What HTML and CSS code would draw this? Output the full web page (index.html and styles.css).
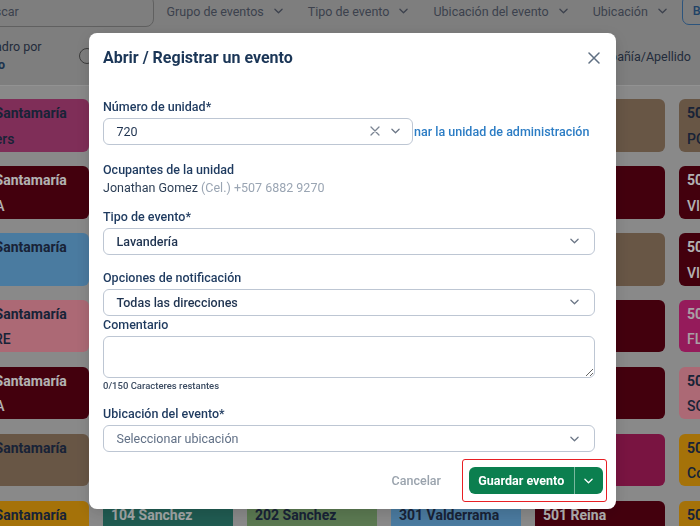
FILE: index.html
```html
<!DOCTYPE html>
<html lang="es">
<head>
<meta charset="utf-8">
<title>Abrir / Registrar un evento</title>
<link rel="stylesheet" href="styles.css">
</head>
<body>
<div class="app">
  <header class="toolbar">
    <div class="toolbar-row">
      <div class="search">Buscar</div>
      <div class="filters">
        <div class="filter"><span>Grupo de eventos</span><svg class="chev" viewBox="0 0 10 6"><path d="M1 1L5 5L9 1"/></svg></div>
        <div class="filter"><span>Tipo de evento</span><svg class="chev" viewBox="0 0 10 6"><path d="M1 1L5 5L9 1"/></svg></div>
        <div class="filter"><span>Ubicación del evento</span><svg class="chev" viewBox="0 0 10 6"><path d="M1 1L5 5L9 1"/></svg></div>
        <div class="filter"><span>Ubicación</span><svg class="chev" viewBox="0 0 10 6"><path d="M1 1L5 5L9 1"/></svg></div>
      </div>
      <div class="outline-btn">Borrar</div>
    </div>
    <div class="toolbar-row2">
      <div class="group-label"><span>Cuadro por</span><strong>Tipo</strong></div>
      <span class="radio"></span>
      <span class="radio-label">Compañía/Apellido</span>
    </div>
  </header>

  <main class="board">
    <!-- row 1 -->
    <div class="card pink"><b>103 Santamaría</b><span>Owners</span></div>
    <div class="card maroon"></div>
    <div class="card blue"></div>
    <div class="card brown"></div>
    <div class="card brown"></div>
    <div class="card brown"><b>501 Pardo</b><span>POSADA</span></div>
    <!-- row 2 -->
    <div class="card maroon"><b>104 Santamaría</b><span>VILLA</span></div>
    <div class="card pink"></div>
    <div class="card gold"></div>
    <div class="card maroon"></div>
    <div class="card maroon"></div>
    <div class="card maroon"><b>502 Ortega</b><span>VILLA</span></div>
    <!-- row 3 -->
    <div class="card blue"><b>105 Santamaría</b></div>
    <div class="card brown"></div>
    <div class="card maroon"></div>
    <div class="card teal"></div>
    <div class="card brown"></div>
    <div class="card maroon"><b>503 Navarro</b><span>VILLA</span></div>
    <!-- row 4 -->
    <div class="card rose"><b>106 Santamaría</b><span>SOBRE</span></div>
    <div class="card green"></div>
    <div class="card blue"></div>
    <div class="card pink"></div>
    <div class="card maroon"></div>
    <div class="card magenta"><b>504 Flores</b><span>FLORES</span></div>
    <!-- row 5 -->
    <div class="card maroon"><b>107 Santamaría</b><span>VILLA</span></div>
    <div class="card gold"></div>
    <div class="card brown"></div>
    <div class="card maroon"></div>
    <div class="card maroon"></div>
    <div class="card rose"><b>505 Solís</b><span>SOBRE</span></div>
    <!-- row 6 -->
    <div class="card brown"><b>108 Santamaría</b></div>
    <div class="card maroon"></div>
    <div class="card rose"></div>
    <div class="card gold"></div>
    <div class="card plum"></div>
    <div class="card gold"><b>506 Cortés</b><span>Comercial</span></div>
    <!-- row 7 -->
    <div class="card gold"><b>109 Santamaría</b></div>
    <div class="card teal"><b>104 Sanchez</b></div>
    <div class="card green"><b>202 Sanchez</b></div>
    <div class="card blue"><b>301 Valderrama</b></div>
    <div class="card maroon"><b>501 Reina</b></div>
    <div class="card gold"><b>507 Campos</b></div>
  </main>
</div>

<div class="backdrop"></div>

<div class="modal" role="dialog" aria-labelledby="modal-title">
  <div class="modal-header">
    <h2 id="modal-title">Abrir / Registrar un evento</h2>
    <button class="close" type="button" aria-label="Cerrar">
      <svg viewBox="0 0 12 12"><path d="M1 1L11 11M11 1L1 11"/></svg>
    </button>
  </div>

  <form class="modal-body">
    <div class="field">
      <label class="label">Número de unidad*</label>
      <div class="unit-row">
        <div class="control unit">
          <span class="value">720</span>
          <span class="icons">
            <svg class="clear" viewBox="0 0 10 10"><path d="M1 1L9 9M9 1L1 9"/></svg>
            <svg class="chev" viewBox="0 0 10 6"><path d="M1 1L5 5L9 1"/></svg>
          </span>
        </div>
        <a class="link">nar la unidad de administración</a>
      </div>
    </div>

    <div class="occupants">
      <div class="occ-title">Ocupantes de la unidad</div>
      <div class="occ-line">Jonathan Gomez <span class="muted">(Cel.) +507 6882 9270</span></div>
    </div>

    <div class="field gap-12">
      <label class="label">Tipo de evento*</label>
      <div class="control"><span class="value strong">Lavandería</span><svg class="chev" viewBox="0 0 10 6"><path d="M1 1L5 5L9 1"/></svg></div>
    </div>

    <div class="field gap-15">
      <label class="label">Opciones de notificación</label>
      <div class="control"><span class="value strong">Todas las direcciones</span><svg class="chev" viewBox="0 0 10 6"><path d="M1 1L5 5L9 1"/></svg></div>
    </div>

    <div class="field gap-1">
      <label class="label">Comentario</label>
      <textarea class="textarea"></textarea>
      <div class="counter">0/150 Caracteres restantes</div>
    </div>

    <div class="field gap-14">
      <label class="label">Ubicación del evento*</label>
      <div class="control"><span class="value placeholder">Seleccionar ubicación</span><svg class="chev" viewBox="0 0 10 6"><path d="M1 1L5 5L9 1"/></svg></div>
    </div>
  </form>

  <div class="modal-footer">
    <button class="cancel" type="button">Cancelar</button>
    <div class="highlight">
      <div class="split">
        <button class="primary" type="button">Guardar evento</button>
        <button class="caret" type="button" aria-label="Más opciones"><svg class="chev" viewBox="0 0 10 6"><path d="M1 1L5 5L9 1"/></svg></button>
      </div>
    </div>
  </div>
</div>
</body>
</html>
```

FILE: styles.css
```css
html, body {
  margin: 0;
  padding: 0;
}
body {
  width: 700px;
  height: 526px;
  overflow: hidden;
  font-family: Roboto, "Liberation Sans", sans-serif;
  font-size: 12.5px;
  background: #c5c5c5;
}

/* ---------- background page ---------- */
.app {
  width: 750px;
  margin-left: -41px;
}
.toolbar {
  background: #b5b5b5;
}
.toolbar-row {
  display: flex;
  align-items: center;
  height: 32px;
  margin-top: -5px;
  padding-left: 10px;
}
.toolbar-row > * {
  flex: none;
}
.search {
  width: 185px;
  height: 32px;
  box-sizing: border-box;
  border: 1px solid #8a8a8a;
  border-radius: 8px;
  padding-left: 10px;
  display: flex;
  align-items: center;
  color: #565e6f;
}
.filters {
  display: flex;
  gap: 25px;
  margin-left: 12.5px;
}
.filter {
  display: flex;
  align-items: center;
  gap: 10px;
  color: #565e6f;
  white-space: nowrap;
}
.chev {
  width: 9px;
  height: 6px;
  flex: none;
}
.chev path {
  fill: none;
  stroke: #6b7686;
  stroke-width: 1.4;
  stroke-linecap: round;
  stroke-linejoin: round;
}
.filter .chev path { stroke: #565e6f; }
.outline-btn {
  margin-left: 15px;
  align-self: flex-start;
  height: 30px;
  box-sizing: border-box;
  border: 1.5px solid #4079b3;
  border-radius: 7px;
  padding: 0 12px 0 10px;
  display: flex;
  align-items: center;
  font-weight: 500;
  color: #2e5f93;
}
.toolbar-row2 {
  display: flex;
  align-items: center;
  height: 58px;
  padding: 0 18px 0 21px;
  border-bottom: 1px solid #d2d2d2;
}
.group-label {
  width: 85px;
  display: flex;
  flex-direction: column;
  line-height: 18px;
  color: #324056;
}
.group-label strong {
  color: #2a4a70;
}
.radio {
  width: 16px;
  height: 16px;
  box-sizing: border-box;
  border: 1.5px solid #565656;
  border-radius: 50%;
  margin-left: 14px;
}
.radio-label {
  margin-left: auto;
  color: #324056;
}

.board {
  background: #c5c5c5;
  padding-top: 13.3px;
  display: grid;
  grid-template-columns: repeat(6, 130px);
  column-gap: 14px;
  row-gap: 14.4px;
  grid-auto-rows: 52.5px;
  height: 520px;
}
.card {
  border-radius: 6px;
  padding: 6px 8px 0;
  display: flex;
  flex-direction: column;
  font-size: 14px;
  line-height: 17px;
  color: #24324f;
  white-space: nowrap;
  overflow: hidden;
}
.card b { font-weight: 700; }
.card span { font-weight: 500; margin-top: 8.5px; }
.pink    { background: #b7427e; }
.maroon  { background: #610014; color: #fff; }
.blue    { background: #6bb0e5; }
.rose    { background: #f697a8; }
.brown   { background: #957b64; }
.gold    { background: #eca40e; }
.magenta { background: #d62883; color: #f2e4ec; }
.plum    { background: #ae1d5e; color: #fff; }
.teal    { background: #2e8375; color: #e8eeee; }
.green   { background: #83ae75; }

.backdrop {
  position: fixed;
  inset: 0;
  background: rgba(0, 0, 0, 0.3);
}

/* ---------- modal ---------- */
.modal {
  position: fixed;
  left: 89px;
  top: 32.5px;
  width: 527px;
  height: 476px;
  box-sizing: border-box;
  padding: 15px 21px 0 14px;
  background: #fff;
  border-radius: 8px;
  box-shadow: 0 4px 16px rgba(0, 0, 0, 0.15);
  color: #1e3a5f;
}
.modal-header {
  display: flex;
  align-items: center;
  justify-content: space-between;
  height: 20px;
}
.modal-header h2 {
  margin: 0;
  font-size: 16px;
  line-height: 20px;
  font-weight: 700;
  color: #1b3657;
}
.close {
  width: 12px;
  height: 12px;
  padding: 0;
  margin-right: -4.5px;
  border: 0;
  background: none;
  display: flex;
}
.close svg { width: 12px; height: 12px; }
.close path {
  stroke: #5f6f82;
  stroke-width: 1.5;
  stroke-linecap: round;
}

.modal-body {
  margin: 31px 0 0;
}
.label {
  display: block;
  font-weight: 500;
  line-height: 16px;
  margin-bottom: 3px;
  color: #1e3a5f;
}
.gap-12 { margin-top: 12px; }
.gap-15 { margin-top: 15px; }
.gap-1  { margin-top: 1px; }
.gap-14 { margin-top: 14.6px; }

.control {
  height: 27px;
  box-sizing: border-box;
  border: 1px solid #bdc6d3;
  border-radius: 6px;
  display: flex;
  align-items: center;
  justify-content: space-between;
  padding: 0 15.5px 0 12.5px;
}
.value {
  color: #1f3350;
}
.value.strong { font-weight: 500; }
.value.placeholder { color: #617086; }

.unit-row {
  display: flex;
  align-items: center;
}
.control.unit {
  width: 310px;
  padding-right: 12.5px;
  flex: none;
}
.icons {
  display: flex;
  align-items: center;
  gap: 10.5px;
}
.clear { width: 10px; height: 10px; }
.clear path {
  stroke: #7b8593;
  stroke-width: 1.3;
  stroke-linecap: round;
}
.link {
  margin-left: 1px;
  font-weight: 500;
  color: #2b7cc4;
  white-space: nowrap;
}

.occupants {
  margin-top: 16px;
  line-height: 18px;
}
.occ-title {
  font-weight: 500;
  color: #1e3a5f;
}
.occ-line {
  color: #2c3e55;
}
.muted { color: #9aa5b3; }

.textarea {
  display: block;
  width: 100%;
  height: 42px;
  box-sizing: border-box;
  margin: 0;
  border: 1px solid #bdc6d3;
  border-radius: 6px;
  resize: vertical;
  font: inherit;
}
.counter {
  margin-top: 2.4px;
  font-size: 9.5px;
  line-height: 12px;
  font-weight: 500;
  color: #3a4a60;
}

.modal-footer {
  display: flex;
  justify-content: flex-end;
  align-items: center;
  margin-top: 7px;
  margin-right: -12px;
}
.cancel {
  border: 0;
  background: none;
  padding: 0;
  margin-right: 21px;
  font: 500 12.5px Roboto, "Liberation Sans", sans-serif;
  color: #9aa3ad;
}
.highlight {
  border: 1.5px solid #e81f24;
  border-radius: 3px;
  padding: 6.5px 3.5px 6.5px 6px;
}
.split {
  display: flex;
  height: 27.5px;
  border-radius: 6px;
  overflow: hidden;
  background: #0b7f4f;
}
.primary {
  width: 105.5px;
  border: 0;
  border-right: 1px solid rgba(255, 255, 255, 0.45);
  background: transparent;
  padding: 0;
  font: 700 12.5px Roboto, "Liberation Sans", sans-serif;
  color: #fff;
}
.caret {
  width: 28px;
  border: 0;
  background: transparent;
  padding: 0;
  display: flex;
  align-items: center;
  justify-content: center;
}
.caret .chev path { stroke: #fff; }
```
